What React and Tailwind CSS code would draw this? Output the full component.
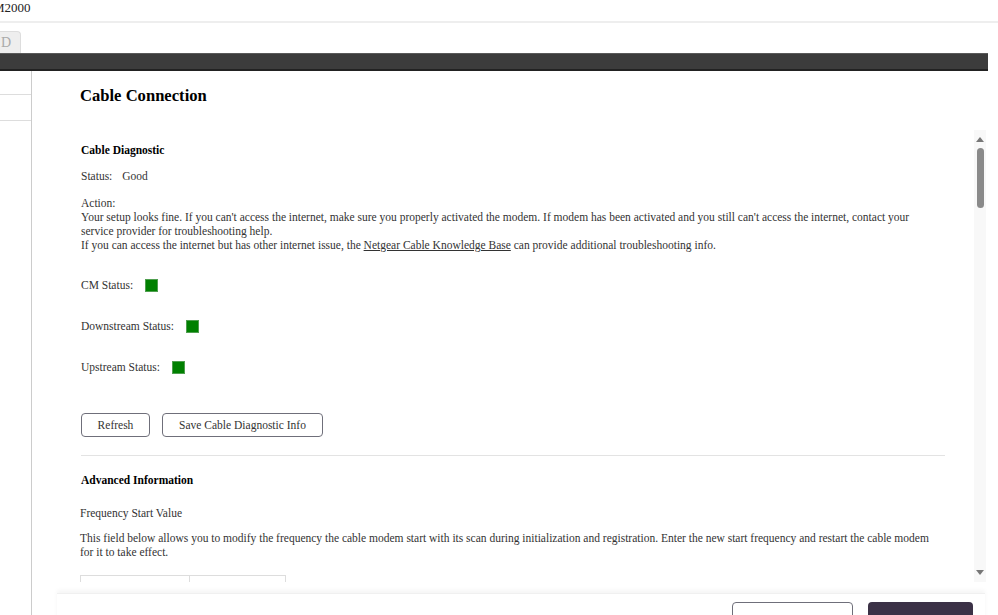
import React from 'react';

function StatusRow({ label, className }) {
  return (
    <div className={`flex items-center h-[14px] ${className}`}>
      <span>{label}</span>
      <span className="ml-[12px] w-[13px] h-[13px] bg-[#008000] border border-[#4f9f4f]" />
    </div>
  );
}

function Scrollbar() {
  return (
    <div className="w-[12px] bg-[#f8f8f8] flex flex-col items-center">
      <div className="mt-[7px] w-0 h-0 border-l-[4px] border-r-[4px] border-b-[5px] border-l-transparent border-r-transparent border-b-[#777]" />
      <div className="mt-[6px] w-[7px] h-[60px] rounded-full bg-[#8a8a8a]" />
      <div className="flex-1" />
      <div className="mb-[7px] w-0 h-0 border-l-[4px] border-r-[4px] border-t-[5px] border-l-transparent border-r-transparent border-t-[#777]" />
    </div>
  );
}

export default function App() {
  return (
    <div className="w-[998px] h-[615px] overflow-hidden bg-white font-['Liberation_Serif',serif] text-[11.5px] text-[#333]">
      {/* top strip */}
      <div className="h-[23px] border-b-2 border-[#eee] pt-[1px]">
        <span className="block -ml-[7px] leading-[14px] text-[13px] text-[#222]">M2000</span>
      </div>
      <div className="h-[30px] flex items-end">
        <div className="w-[21px] h-[22px] bg-[#eee] border-r border-t border-[#ddd] rounded-tr-[4px] text-[14px] text-[#aaa] leading-[22px] pl-[1px]">
          D
        </div>
      </div>
      <div className="w-[988px] h-[18px] bg-[#3c3c3c] border-t border-b-2 border-t-[#5a5a5a] border-b-[#222]" />

      <div className="flex h-[544px]">
        {/* left nav */}
        <div className="w-[32px] border-r border-[#ccc] shrink-0">
          <div className="h-[24px] border-b border-[#ddd]" />
          <div className="h-[26px] border-b border-[#ddd]" />
        </div>

        {/* main */}
        <div className="flex-1 flex flex-col">
          <h1 className="pl-[48px] pt-[16px] text-[16.6px] leading-[18px] font-bold text-black">Cable Connection</h1>

          <div className="mt-[25px] ml-[25px] w-[929px] h-[452px] flex">
            <div className="flex-1 overflow-hidden pl-[24px] leading-[14px]">
              <div className="w-[864px]">
                <h2 className="mt-[13px] font-bold text-black">Cable Diagnostic</h2>
                <div className="mt-[12px]">
                  Status:<span className="ml-[10px]">Good</span>
                </div>
                <div className="mt-[13px] w-[860px]">
                  <div>Action:</div>
                  <p>
                    Your setup looks fine. If you can't access the internet, make sure you properly activated the modem. If modem has been activated and you still can't access the internet, contact your service provider for troubleshooting help.
                  </p>
                  <p>
                    If you can access the internet but has other internet issue, the{' '}
                    <a className="underline">Netgear Cable Knowledge Base</a> can provide additional troubleshooting info.
                  </p>
                </div>

                <StatusRow label="CM Status:" className="mt-[26px]" />
                <StatusRow label="Downstream Status:" className="mt-[27px]" />
                <StatusRow label="Upstream Status:" className="mt-[27px]" />

                <div className="mt-[39px] flex gap-[12px]">
                  <button className="w-[69px] h-[24px] rounded-[4px] border border-[#6f6f7a] bg-white text-[11.5px] text-[#333]">
                    Refresh
                  </button>
                  <button className="w-[161px] h-[24px] rounded-[4px] border border-[#6f6f7a] bg-white text-[11.5px] text-[#333]">
                    Save Cable Diagnostic Info
                  </button>
                </div>

                <div className="mt-[18px] h-px bg-[#e3e3e3]" />

                <h2 className="mt-[17px] font-bold text-black">Advanced Information</h2>
                <div className="mt-[19px] -ml-[1px]">Frequency Start Value</div>
                <p className="mt-[11px] -ml-[1px] w-[860px]">
                  This field below allows you to modify the frequency the cable modem start with its scan during initialization and registration. Enter the new start frequency and restart the cable modem for it to take effect.
                </p>
                <div className="mt-[16px] -ml-[1px] flex">
                  <div className="w-[110px] h-[30px] border border-[#ddd]" />
                  <div className="w-[96px] h-[30px] border border-l-0 border-[#ddd]" />
                </div>
              </div>
            </div>
            <div className="w-[29px]" />
            <Scrollbar />
          </div>

          <div className="mt-[11px] ml-[25px] w-[928px] flex-1 bg-white shadow-[0_-3px_4px_rgba(0,0,0,0.04)] border-t border-[#f0f0f0] flex justify-end gap-[15px] pr-[12px] pt-[8px]">
            <button className="w-[121px] h-[36px] rounded-[4px] border border-[#6f6f7a] bg-white text-[14px] text-[#333]">
              Cancel
            </button>
            <button className="w-[105px] h-[36px] rounded-[4px] bg-[#3b3146] text-[14px] text-white">
              Apply
            </button>
          </div>
        </div>
      </div>
    </div>
  );
}
